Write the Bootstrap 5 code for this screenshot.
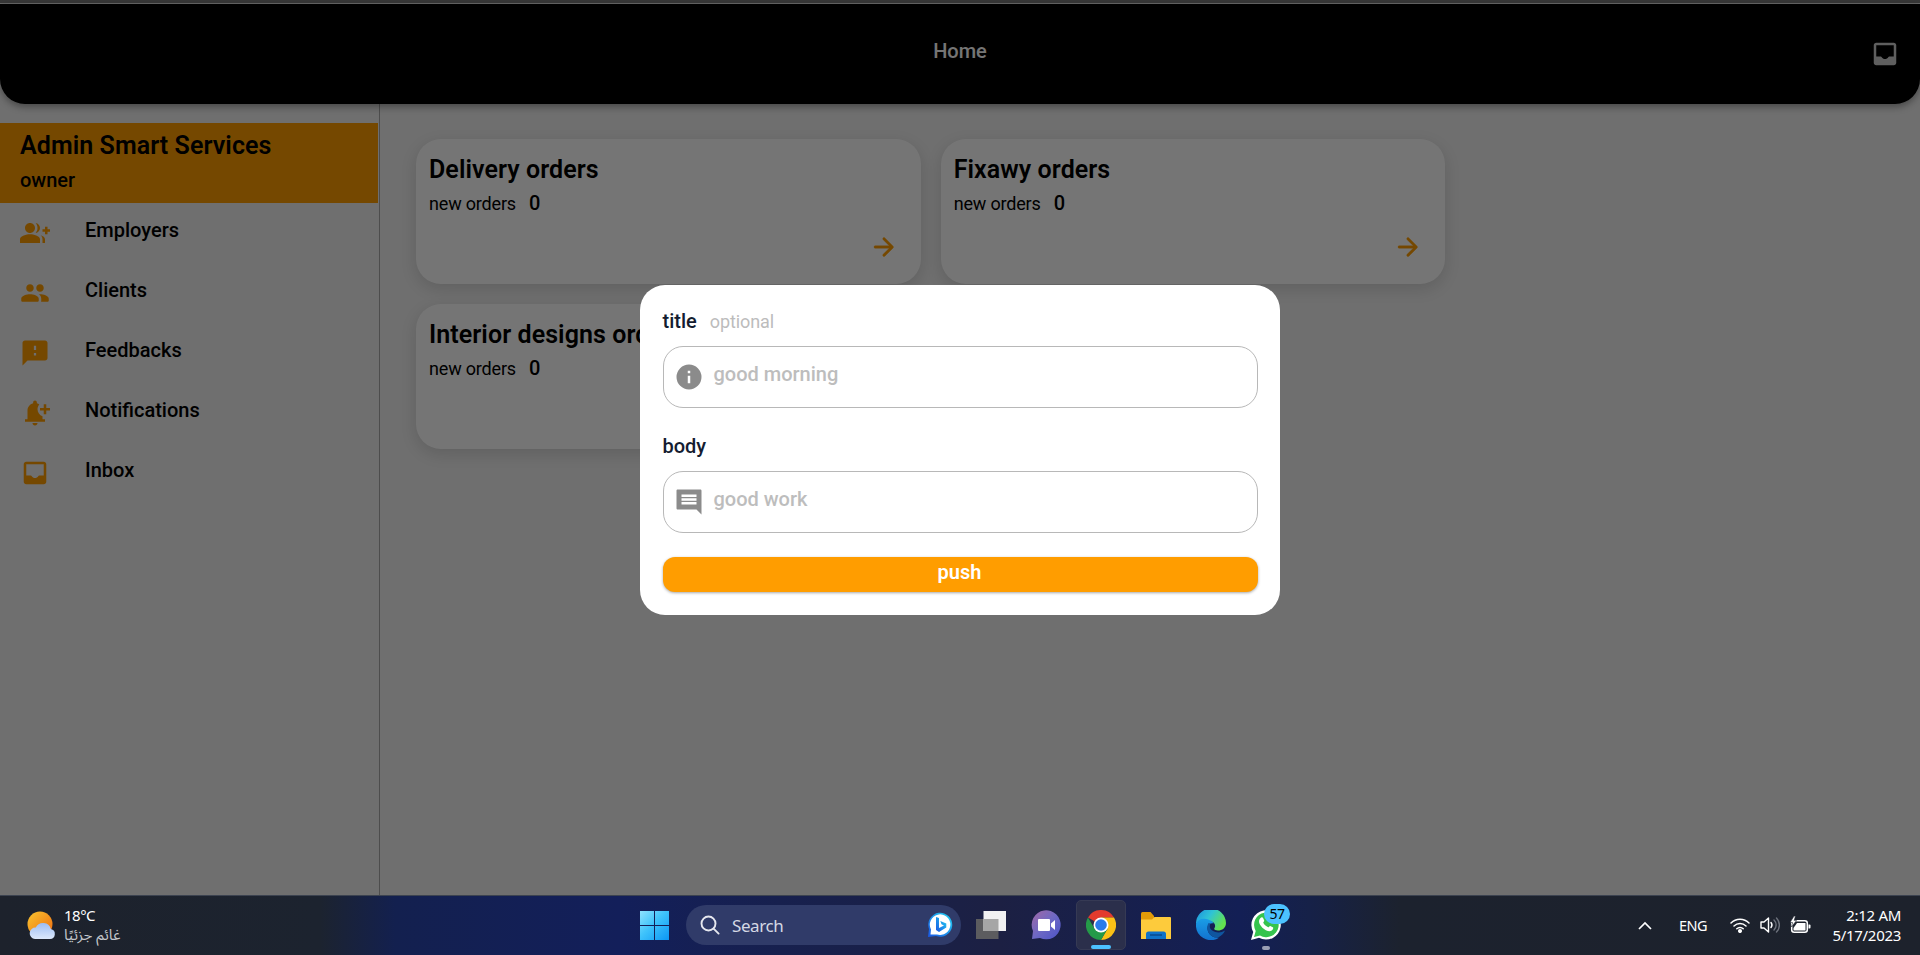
<!DOCTYPE html>
<html lang="en">
<head>
<meta charset="utf-8">
<title>Home</title>
<link href="https://cdn.jsdelivr.net/npm/bootstrap@5.3.0/dist/css/bootstrap.min.css" rel="stylesheet">
<style>
  :root { --brand: #ff9d00; }
  body { height: 955px; font-family: Roboto, "Liberation Sans", sans-serif; color: #000; background: #f1f1f1; line-height: 1; }
  svg { display: block; flex: none; }
  .ic { width: 30px; height: 30px; fill: currentColor; }
  .app { height: 895px; }
  .edge { height: 4px; background: #787878; border-bottom: 1px solid #dedede; }
  .topbar { height: 100px; background: #000; color: #fff; border-radius: 0 0 25px 25px; box-shadow: 0 3px 7px rgba(0,0,0,.35); padding: 0 20px; z-index: 1; }
  .topbar .ttl { font-size: 20px; font-weight: 500; padding-bottom: 7px; }
  .topbar .ic { color: #cfcfcf; }
  .side { width: 380px; border-right: 1px solid #a8a8a8; padding-top: 19px; }
  .who { height: 80px; width: 378px; background: var(--brand); padding: 10px 20px 0; }
  .who .nm { font-size: 25px; font-weight: 600; line-height: 25px; letter-spacing: .07px; }
  .who .role { font-size: 20px; font-weight: 500; line-height: 24px; margin-top: 10px; }
  .entry { height: 60px; padding: 0 20px; }
  .entry .ic { color: var(--brand); }
  .entry span { font-size: 20px; font-weight: 500; margin-left: 35px; padding-bottom: 6px; }
  .orders { padding: 35px 400px 0 36px; gap: 20px; min-width: 0; }
  .order { width: 504.7px; height: 145px; background: #fff; border-radius: 25px; box-shadow: 0 5px 16px rgba(0,0,0,.13); padding: 18px 22px 22px 13px; }
  .order .nm { font-size: 25px; font-weight: 600; line-height: 25px; letter-spacing: .07px; }
  .order .cnt { font-size: 18px; line-height: 24px; margin-top: 9px; letter-spacing: -.18px; }
  .order .num { font-size: 20px; font-weight: 500; margin-left: 13px; }
  .order .ic { color: var(--brand); }
  .scrim { background: rgba(0,0,0,.54); z-index: 2; padding-top: 5px; }
  .sheet { width: 640px; height: 330px; border-radius: 25px; background: #fff; padding: 23.500px 22.500px; color: #141c30; }
  .sheet .lbl { font-size: 20px; font-weight: 500; height: 24px; line-height: 24px; }
  .sheet .opt { font-size: 18px; font-weight: 400; color: #bcbcbc; margin-left: 13px; letter-spacing: -.1px; }
  .field { height: 62px; border: 1px solid #b8b8b8; border-radius: 20px; padding: 0 10px; color: #8b8b8b; margin-top: 13px; }
  .field span { color: #bdbdbd; font-size: 20px; font-weight: 500; margin-left: 10px; padding-bottom: 5px; }
  .push { height: 35px; border: 0; border-radius: 12px; background: var(--brand); color: #fff; font-size: 20px; font-weight: 600; line-height: 20px; margin-top: 24.500px; padding: 0 1px 6px 0; box-shadow: 0 1px 3px rgba(0,0,0,.35); }
  .taskbar { height: 60px; border-top: 1px solid #3c4350; padding-bottom: 1px; color: #fff; font-family: "Noto Sans", "Open Sans", sans-serif; font-size: 14.5px;
    background: linear-gradient(90deg, #1d222c 0, #1c232f 320px, #13204f 395px, #131f5a 620px, #17204e 780px, #1c2043 1000px, #131f55 1240px, #162148 1310px, #1c222e 1400px, #1d222c 100%); }
  .findbox { width: 275px; height: 40px; border-radius: 20px; background: #303b69; color: #d5d8e4; font-size: 17px; padding: 0 8px 0 14px; }
  .tile { width: 50px; height: 50px; }
  .tile.live { background: #2b2f4b; border: 1px solid #363a54; border-radius: 5px; }
  .under { height: 4px; border-radius: 2px; bottom: 0; left: 50%; transform: translateX(-50%); }
  .count { left: 23px; top: 4px; width: 26px; height: 20px; border-radius: 10px; background: #4cc2ff; color: #000; font-size: 14px; line-height: 20px; text-align: center; letter-spacing: -.5px; }
  .clock { line-height: 20px; font-size: 15px; letter-spacing: -.3px; white-space: nowrap; padding-bottom: 1px; }
</style>
</head>
<body class="overflow-hidden">
<div class="app position-relative d-flex flex-column">
  <div class="edge"></div>
  <header class="topbar position-relative d-flex align-items-center">
    <div style="width:30px"></div>
    <div class="ttl flex-grow-1 text-center">Home</div>
    <svg class="ic" viewBox="0 0 24 24"><path d="M19 3H5c-1.100 0-2 .9-2 2v14c0 1.100.9 2 2 2h14c1.100 0 2-.9 2-2V5c0-1.100-.9-2-2-2zm0 11h-3.560c-.36 0-.68.19-.86.5-.52.9-1.470 1.500-2.580 1.500s-2.060-.6-2.580-1.500c-.18-.31-.51-.5-.86-.5H5V5h14v9z"/></svg>
  </header>
  <div class="d-flex flex-grow-1">
    <aside class="side flex-shrink-0">
      <div class="who">
        <div class="nm">Admin Smart Services</div>
        <div class="role">owner</div>
      </div>
      <nav>
        <div class="entry d-flex align-items-center"><svg class="ic" viewBox="0 0 24 24"><path d="M22 9V7h-2v2h-2v2h2v2h2v-2h2V9zM8 12c2.210 0 4-1.790 4-4s-1.790-4-4-4-4 1.790-4 4 1.790 4 4 4zm0 1c-2.670 0-8 1.340-8 4v3h16v-3c0-2.660-5.330-4-8-4zm4.510-8.950C13.430 5.110 14 6.490 14 8s-.57 2.890-1.490 3.950C14.470 11.700 16 10.040 16 8s-1.530-3.700-3.490-3.950zm4.020 9.780C17.420 14.660 18 15.700 18 17v3h2v-3c0-1.450-1.590-2.510-3.470-3.170z"/></svg><span>Employers</span></div>
        <div class="entry d-flex align-items-center"><svg class="ic" viewBox="0 0 24 24"><path d="M16 11c1.660 0 2.990-1.340 2.990-3S17.660 5 16 5s-3 1.340-3 3 1.340 3 3 3zm-8 0c1.660 0 2.990-1.340 2.990-3S9.660 5 8 5 5 6.340 5 8s1.340 3 3 3zm0 2c-2.330 0-7 1.170-7 3.500V18c0 .55.45 1 1 1h12c.55 0 1-.45 1-1v-1.500c0-2.330-4.670-3.500-7-3.500zm8 0c-.29 0-.62.02-.97.05.02.01.03.03.04.04 1.140.83 1.930 1.940 1.930 3.410V18c0 .35-.07.69-.18 1H22c.55 0 1-.45 1-1v-1.500c0-2.330-4.670-3.500-7-3.500z"/></svg><span>Clients</span></div>
        <div class="entry d-flex align-items-center"><svg class="ic" viewBox="0 0 24 24"><path d="M20 2H4c-1.100 0-1.990.9-1.990 2L2 22l4-4h14c1.100 0 2-.9 2-2V4c0-1.100-.9-2-2-2zm-7.100 12h-1.800v-2h1.800v2zm0-4.500h-1.800V6.200h1.800v3.300z"/></svg><span>Feedbacks</span></div>
        <div class="entry d-flex align-items-center"><svg class="ic" viewBox="0 0 24 24"><path d="M10 20h4c0 1.100-.9 2-2 2s-2-.9-2-2zM14 9c0 2.610 1.670 4.830 4 5.660V17h2v2H4v-2h2v-7c0-2.790 1.910-5.140 4.500-5.800v-.7C10.500 2.670 11.170 2 12 2s1.500.67 1.500 1.500v.7c.71.18 1.360.49 1.950.9C14.540 6.140 14 7.510 14 9zM24 8h-3V5h-2v3h-3v2h3v3h2v-3h3V8z"/></svg><span>Notifications</span></div>
        <div class="entry d-flex align-items-center"><svg class="ic" viewBox="0 0 24 24"><path d="M19 3H5c-1.100 0-2 .9-2 2v14c0 1.100.9 2 2 2h14c1.100 0 2-.9 2-2V5c0-1.100-.9-2-2-2zm0 11h-3.560c-.36 0-.68.19-.86.5-.52.9-1.470 1.500-2.580 1.500s-2.060-.6-2.580-1.500c-.18-.31-.51-.5-.86-.5H5V5h14v9z"/></svg><span>Inbox</span></div>
      </nav>
    </aside>
    <main class="orders d-flex flex-wrap align-content-start flex-grow-1">
      <div class="order d-flex flex-column">
        <div class="nm">Delivery orders</div>
        <div class="cnt">new orders<span class="num">0</span></div>
        <svg class="ic mt-auto ms-auto" viewBox="0 0 24 24"><path stroke="currentColor" stroke-width=".3" d="M5 13h11.170l-4.880 4.880c-.39.39-.39 1.030 0 1.420.39.39 1.020.39 1.410 0l6.590-6.590c.39-.39.39-1.020 0-1.410l-6.580-6.600c-.39-.39-1.020-.39-1.410 0-.39.39-.39 1.020 0 1.410L16.170 11H5c-.55 0-1 .45-1 1s.45 1 1 1z"/></svg>
      </div>
      <div class="order d-flex flex-column">
        <div class="nm">Fixawy orders</div>
        <div class="cnt">new orders<span class="num">0</span></div>
        <svg class="ic mt-auto ms-auto" viewBox="0 0 24 24"><path stroke="currentColor" stroke-width=".3" d="M5 13h11.170l-4.880 4.880c-.39.39-.39 1.030 0 1.420.39.39 1.020.39 1.410 0l6.590-6.590c.39-.39.39-1.020 0-1.410l-6.580-6.600c-.39-.39-1.020-.39-1.410 0-.39.39-.39 1.020 0 1.410L16.170 11H5c-.55 0-1 .45-1 1s.45 1 1 1z"/></svg>
      </div>
      <div class="order d-flex flex-column">
        <div class="nm">Interior designs orders</div>
        <div class="cnt">new orders<span class="num">0</span></div>
      </div>
    </main>
  </div>

  <div class="scrim position-absolute top-0 start-0 w-100 h-100 d-flex align-items-center justify-content-center">
    <div class="sheet" role="dialog">
      <div class="lbl">title<span class="opt">optional</span></div>
      <div class="field d-flex align-items-center"><svg class="ic" viewBox="0 0 24 24"><path d="M12 2a10 10 0 1 0 0 20 10 10 0 0 0 0-20zm1 15h-2v-6h2v6zm0-8h-2V7h2v2z"/></svg><span>good morning</span></div>
      <div class="lbl" style="margin-top:26px">body</div>
      <div class="field d-flex align-items-center"><svg class="ic" viewBox="0 0 24 24"><path d="M22 3c0-.6-.4-1-1-1H3c-.6 0-1 .4-1 1v14c0 .6.4 1 1 1h15l4 4V3zM18 14H6v-2h12v2zm0-3H6V9h12v2zm0-3H6V6h12v2z"/></svg><span>good work</span></div>
      <button class="push btn w-100 d-flex align-items-center justify-content-center">push</button>
    </div>
  </div>
</div>

<footer class="taskbar d-flex align-items-center">
  <div class="d-flex align-items-center" style="width:635px;padding-left:27px">
    <svg width="29" height="30" viewBox="0 0 29 30">
      <defs>
        <linearGradient id="sun" x1="0" y1="0" x2="1" y2="1"><stop offset="0" stop-color="#f9c52f"/><stop offset="1" stop-color="#ee6a10"/></linearGradient>
        <linearGradient id="cloud" x1="0" y1="0" x2="0" y2="1"><stop offset="0" stop-color="#9dbdf3"/><stop offset="1" stop-color="#dce8fc"/></linearGradient>
      </defs>
      <circle cx="13" cy="14" r="12.500" fill="url(#sun)"/>
      <path d="M8 29h15a5 5 0 0 0 .8-9.900 8 8 0 0 0-15-1.500A5.700 5.700 0 0 0 8 29z" fill="url(#cloud)"/>
    </svg>
    <div class="ms-2 clock"><div style="letter-spacing:-.5px">18°C</div><div style="color:#c3c6cb;font-family:'Noto Sans Arabic','DejaVu Sans',sans-serif;font-size:15px;letter-spacing:0" dir="rtl">غائم جزئيًا</div></div>
  </div>
  <div class="d-flex align-items-center flex-grow-1">
    <svg width="40" height="40" viewBox="0 0 40 40">
      <defs><linearGradient id="win" x1="0" y1="0" x2="1" y2="1"><stop offset="0" stop-color="#8fe3ff"/><stop offset=".45" stop-color="#3fc3fb"/><stop offset="1" stop-color="#0b96f5"/></linearGradient></defs>
      <path d="M5 6h14v14H5zM20 6h14v14H20zM5 21h14v14H5zM20 21h14v14H20z" fill="url(#win)"/>
    </svg>
    <div class="findbox d-flex align-items-center" style="margin-left:11px">
      <svg width="20" height="20" viewBox="0 0 20 20" fill="none" stroke="#e6e8ef" stroke-width="1.900" stroke-linecap="round"><circle cx="8.500" cy="8.500" r="7"/><path d="M13.600 13.600l5 5"/></svg>
      <span style="margin-left:12px;letter-spacing:-.4px">Search</span>
      <svg class="ms-auto" width="25" height="26" viewBox="0 0 25 26">
        <defs><linearGradient id="bing" x1="1" y1="0" x2="0" y2="1"><stop offset="0" stop-color="#21d4f3"/><stop offset="1" stop-color="#1a55e3"/></linearGradient></defs>
        <path d="M0 25l1-8A12 12 0 1 1 8 24z" fill="url(#bing)"/><path d="M2.500 22.500l.5-5A10.300 10.300 0 1 1 9 22.500z" fill="#fff"/>
        <path d="M8 5l3 1v10l5-2.500-2.500-1.200-1.200-3.300 6 2.500v4L11 20l-3-2z" fill="url(#bing)"/>
      </svg>
    </div>
    <div class="d-flex align-items-center" style="margin-left:5px;gap:5px">
      <div class="tile d-flex align-items-center justify-content-center">
        <svg width="30" height="28" viewBox="0 0 30 28"><rect y="8" width="22.500" height="20" fill="#5c5c5f"/><rect x="7.500" width="22.500" height="20" fill="#f1f1f2"/><path d="M7.500 8h15v12h-15z" fill="#a6a6a6"/></svg>
      </div>
      <div class="tile d-flex align-items-center justify-content-center">
        <svg width="30" height="30" viewBox="0 0 30 30"><defs><linearGradient id="chat" x1="0" y1="0" x2="1" y2="1"><stop offset="0" stop-color="#a168a5"/><stop offset=".5" stop-color="#6e69c4"/><stop offset="1" stop-color="#4a52c8"/></linearGradient></defs>
          <path d="M1 29l1-8A14.500 14.500 0 1 1 9 28z" fill="url(#chat)"/><rect x="7" y="9" width="12" height="12" rx="1" fill="#fff"/><path d="M20 13.500L24 10v10l-4-3.500z" fill="#fff"/></svg>
      </div>
      <div class="tile live position-relative d-flex align-items-center justify-content-center">
        <svg width="30" height="30" viewBox="0 0 30 30"><path d="M15 15L2 7.500A15 15 0 0 1 28 7.500H15z" fill="#e33b2e"/><path d="M28 7.500A15 15 0 0 1 15 30l6.500-11.250L15 7.500z" fill="#fbc116"/><path d="M2 7.500A15 15 0 0 0 15 30l6.500-11.250L8.500 18.750z" fill="#249a48"/><circle cx="15" cy="15" r="7.500" fill="#fff"/><circle cx="15" cy="15" r="5.800" fill="#2a7bea"/></svg>
        <div class="under position-absolute" style="width:20px;background:#4cc2ff"></div>
      </div>
      <div class="tile d-flex align-items-center justify-content-center">
        <svg width="30" height="27" viewBox="0 0 30 27"><path d="M0 1.500Q0 0 1.500 0h8L13 4v5H0z" fill="#e29b08"/><path d="M0 7.500h11l2.500-2.500H29q1 0 1 1v21H0z" fill="#fdcb3c"/><path d="M5 27v-5q0-2.500 2.500-2.500h15q2.500 0 2.500 2.500v5z" fill="#0f72c9"/><path d="M9 23h12" stroke="#0a4a8c" stroke-width="1.500"/></svg>
      </div>
      <div class="tile d-flex align-items-center justify-content-center">
        <svg width="30" height="30" viewBox="0 0 30 30"><defs><linearGradient id="edg" x1="0" y1="0" x2="1" y2=".5"><stop offset="0" stop-color="#1b8fe0"/><stop offset=".5" stop-color="#2fc3d6"/><stop offset="1" stop-color="#63e24f"/></linearGradient><linearGradient id="edb" x1="0" y1="0" x2="0" y2="1"><stop offset="0" stop-color="#1a9de6"/><stop offset="1" stop-color="#1272cf"/></linearGradient></defs>
          <path d="M0 14A15 15 0 0 1 30 13c0 5-4 7.500-8 7.500-3 0-4.500-1-3.500-2.500 2-3-1-7-5-7C7 11 1 13 0 14z" fill="url(#edg)"/><path d="M0 14c1-4 6-6 10-5 4 .6 7 2.500 7.500 4.500-4-1-6.500 2-6 5.500.6 6 6 9 11.500 8.700A15 15 0 0 1 0 14z" fill="url(#edb)"/><path d="M12.500 13C9 19 13 27 21 28c4-1.500 7-4.500 8-7.500-3.500 2.500-9 2.500-12 .5-3-2-4-4-2.500-7.500z" fill="#0f559f"/></svg>
      </div>
      <div class="tile position-relative d-flex align-items-center justify-content-center">
        <svg width="30" height="30" viewBox="0 0 30 30"><path d="M0 30l2.200-8A14.700 14.700 0 1 1 8 27.800z" fill="#fff"/><path d="M3 27l1.700-6A12.300 12.300 0 1 1 9 25.400z" fill="#35c44d"/><path d="M9.500 8c1-1.200 2.200-1 2.700.2l1 2.300c.2.700-.9 1.500-1 2.100.8 2 2.700 3.800 5 4.700.6 0 1.300-1.600 2-1.400l2.600 1.300c1.200.7-.2 3.800-3 4C13.500 21.200 8 15 8 11.500c0-1.500.6-2.600 1.500-3.500z" fill="#fff"/></svg>
        <div class="count position-absolute">57</div>
        <div class="under position-absolute" style="width:8px;background:#9a9fb4"></div>
      </div>
    </div>
  </div>
  <div class="d-flex align-items-center" style="padding-right:19px">
    <svg width="14" height="9" viewBox="0 0 14 9" fill="none" stroke="#fff" stroke-width="1.700"><path d="M1 8l6-6 6 6"/></svg>
    <span style="margin-left:27px;letter-spacing:-.5px;width:29px">ENG</span>
    <svg style="margin-left:22px" width="20" height="16" viewBox="0 0 20 16" fill="none" stroke="#fff" stroke-width="1.500" stroke-linecap="round"><path d="M1 6a12.700 12.700 0 0 1 18 0M4 9a8.500 8.500 0 0 1 12 0M6.800 11.800a4.500 4.500 0 0 1 6.400 0"/><circle cx="10" cy="14" r="1.300" fill="#fff"/></svg>
    <svg style="margin-left:10px" width="20" height="18" viewBox="0 0 20 18" fill="none" stroke="#fff" stroke-width="1.400" stroke-linejoin="round" stroke-linecap="round"><path d="M1 6v6h3l4.500 4V2L4 6zM11 6.500a4 4 0 0 1 0 5"/><path d="M14 4a7 7 0 0 1 0 10M16.500 2a10 10 0 0 1 0 14" stroke="#6d727c"/></svg>
    <svg style="margin-left:10px" width="21" height="18" viewBox="0 0 21 18"><rect x="1.700" y="4.700" width="15.600" height="11.600" rx="2.500" fill="none" stroke="#fff" stroke-width="1.500"/><path d="M7 7h8.500v7.500h-12V12z" fill="#fff"/><path d="M18.500 8.500h1a1 1 0 0 1 1 1v2a1 1 0 0 1-1 1h-1z" fill="#fff"/><path d="M4 0L0 6.500h2.500L1.500 11 6.500 4.500H4.200L5.500 0z" fill="#fff" stroke="#1d222c" stroke-width=".6"/></svg>
    <div class="clock text-end" style="margin-left:20px;width:70px"><div>2:12 AM</div><div>5/17/2023</div></div>
  </div>
</footer>
<script src="https://cdn.jsdelivr.net/npm/bootstrap@5.3.0/dist/js/bootstrap.bundle.min.js"></script>
</body>
</html>
